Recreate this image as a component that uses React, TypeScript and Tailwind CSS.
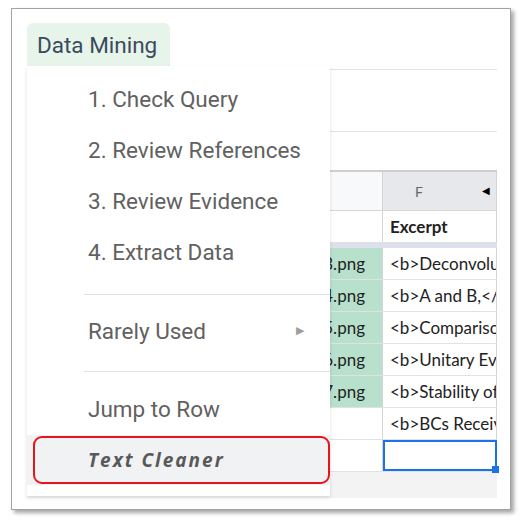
import React from 'react';

const rows = [
  { file: 'image_3.png', excerpt: '<b>Deconvolution of' },
  { file: 'image_4.png', excerpt: '<b>A and B,</b>' },
  { file: 'image_5.png', excerpt: '<b>Comparison of' },
  { file: 'image_6.png', excerpt: '<b>Unitary Evolution' },
  { file: 'image_7.png', excerpt: '<b>Stability of' },
  { file: '', excerpt: '<b>BCs Received' },
];

const mainItems = ['1. Check Query', '2. Review References', '3. Review Evidence', '4. Extract Data'];

const App: React.FC = () => {
  return (
    <div className="w-[527px] h-[526px] bg-white pl-[11px] pt-[8px]" style={{ fontFamily: 'Roboto, sans-serif' }}>
      {/* Screenshot frame */}
      <div className="relative w-[500px] h-[502px] border border-[#a3a3a3] bg-white shadow-[3px_3px_4px_rgba(0,0,0,0.35)] overflow-hidden">
        <div className="flex flex-col pl-[15px] pr-[13px]">
          {/* Toolbar */}
          <div className="pt-[14px] h-[60px]">
            <div className="w-[143px] h-[46px] bg-[#e6f4ea] rounded-t-[6px] pl-[10px] pt-[6px] text-[22.5px] text-[#3b4a5c]">
              Data Mining
            </div>
          </div>
          <div className="h-[62px] border-t border-[#e3e3e3]" />
          <div className="h-[39px] border-t border-[#e3e3e3]" />

          {/* Sheet */}
          <div className="border-t-2 border-[#cfcfcf] text-[17px] text-[#222]" style={{ fontFamily: 'Lato, "Open Sans", sans-serif' }}>
            <div className="flex h-[39px] border-b border-[#d6d6d6]">
              <div className="w-[356px] bg-[#f8f9fa] border-r border-[#d4d4d4]" />
              <div className="w-[114px] bg-[#e6e8eb] border-r border-[#d4d4d4] flex items-center relative">
                <span className="ml-[32px] text-[14px] text-[#666]">F</span>
                <span className="absolute right-[6px] top-[11px] text-[10px] text-black">◀</span>
              </div>
            </div>
            <div className="flex h-[31px]">
              <div className="w-[356px] bg-white border-r border-[#d4d4d4]" />
              <div className="w-[114px] bg-white border-r border-[#d4d4d4] pl-[7px] flex items-center font-bold">Excerpt</div>
            </div>
            <div className="h-[6px] bg-[#dde2ea]" />
            {rows.map((r, i) => (
              <div key={i} className="flex h-[32px] border-b border-[#e2e2e2]">
                <div className={`w-[356px] border-r border-[#d4d4d4] flex items-center justify-end pr-[17px] overflow-hidden ${r.file ? 'bg-[#b7e1cd]' : 'bg-white'}`}>
                  {r.file}
                </div>
                <div className="w-[114px] border-r border-[#d4d4d4] pl-[7px] flex items-center whitespace-nowrap overflow-hidden">
                  {r.excerpt}
                </div>
              </div>
            ))}
            <div className="flex h-[32px] border-b border-[#e2e2e2]">
              <div className="w-[356px] border-r border-[#d4d4d4]" />
              <div className="w-[114px] border-2 border-[#1a73e8] relative">
                <div className="absolute -right-[4px] -bottom-[4px] w-[7px] h-[7px] bg-[#1a73e8]" />
              </div>
            </div>
            <div className="h-[26px] bg-[#f3f3f3]" />
          </div>
        </div>

        {/* Dropdown menu */}
        <div className="absolute left-[15px] top-[57px] w-[303px] h-[430px] bg-white shadow-[0_2px_4px_rgba(0,0,0,0.12)] pt-[8px] text-[22.5px] text-[#616161]">
          {mainItems.map((m) => (
            <div key={m} className="h-[51px] flex items-center pl-[61px]">{m}</div>
          ))}
          <div className="mt-[16px] ml-[57px] border-t border-[#e0e0e0]" />
          <div className="mt-[11px] h-[51px] flex items-center pl-[61px] pr-[26px] justify-between">
            <span>Rarely Used</span>
            <span className="text-[11px] text-[#9e9e9e]">▶</span>
          </div>
          <div className="mt-[14px] ml-[57px] border-t border-[#e0e0e0]" />
          <div className="mt-[12px] h-[51px] flex items-center pl-[61px]">Jump to Row</div>
          <div className="h-[50px] bg-[#f1f2f4] pl-[6px] py-[1px]">
            <div className="h-[48px] border-2 border-[#e8131b] rounded-[9px] flex items-center pl-[53px]">
              <span className="italic font-bold tracking-[2px] text-[19px] text-[#595959]" style={{ fontFamily: '"Open Sans", sans-serif' }}>
                Text Cleaner
              </span>
            </div>
          </div>
        </div>
      </div>
    </div>
  );
};

export default App;
